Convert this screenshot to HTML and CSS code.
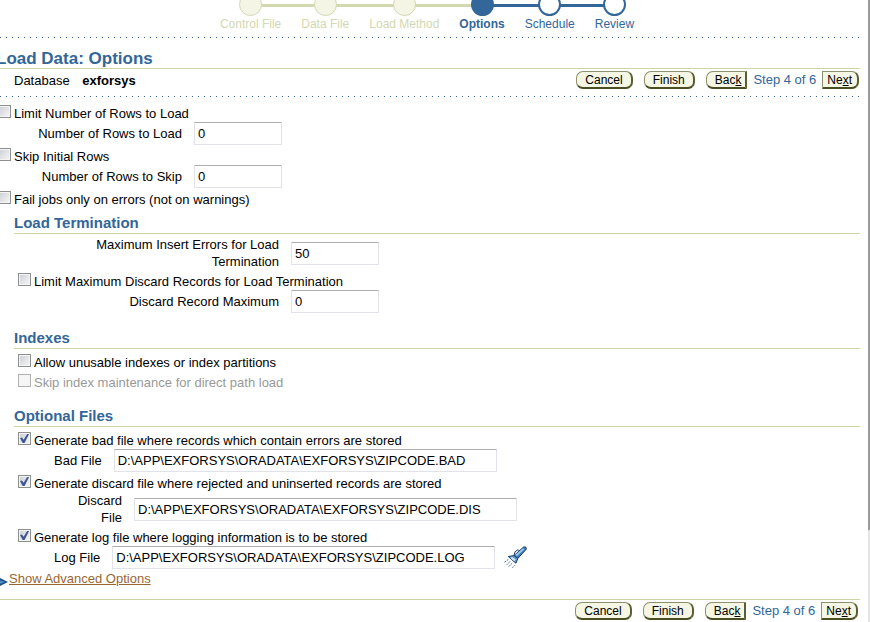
FILE: index.html
```html
<!DOCTYPE html>
<html lang="en">
<head>
    <meta charset="UTF-8">
    <meta name="viewport" content="width=device-width, initial-scale=1.0">
    <title>Load Data: Options</title>
    <link rel="stylesheet" href="styles.css">
</head>
<body>
    <main class="page">
        <ol class="train">
            <li class="step done"><span class="dot"></span>Control File</li>
            <li class="step done"><span class="dot"></span>Data File</li>
            <li class="step done"><span class="dot"></span>Load Method</li>
            <li class="step current"><span class="dot"></span>Options</li>
            <li class="step"><span class="dot"></span>Schedule</li>
            <li class="step"><span class="dot"></span>Review</li>
        </ol>
        <div class="dotted"></div>

        <h1>Load Data: Options</h1>
        <div class="bar">
            <div class="database">Database <b>exforsys</b></div>
            <div class="nav">
                <button type="button">Cancel</button>
                <button type="button">Finish</button>
                <div class="pager">
                    <button type="button" class="back">Bac<u>k</u></button>
                    <span>Step 4 of 6</span>
                    <button type="button" class="next">Ne<u>x</u>t</button>
                </div>
            </div>
        </div>
        <div class="dotted"></div>

        <form class="options">
            <div class="check"><input type="checkbox" id="limit"><label for="limit">Limit Number of Rows to Load</label></div>
            <div class="field rows">
                <label for="load_rows">Number of Rows to Load</label>
                <input type="text" id="load_rows" value="0">
            </div>
            <div class="check"><input type="checkbox" id="skip"><label for="skip">Skip Initial Rows</label></div>
            <div class="field rows">
                <label for="skip_rows">Number of Rows to Skip</label>
                <input type="text" id="skip_rows" value="0">
            </div>
            <div class="check"><input type="checkbox" id="fail"><label for="fail">Fail jobs only on errors (not on warnings)</label></div>

            <section class="termination">
                <h2>Load Termination</h2>
                <div class="field limits">
                    <label for="max_errors">Maximum Insert Errors for Load Termination</label>
                    <input type="text" id="max_errors" value="50">
                </div>
                <div class="check"><input type="checkbox" id="limit_discard"><label for="limit_discard">Limit Maximum Discard Records for Load Termination</label></div>
                <div class="field limits">
                    <label for="max_discard">Discard Record Maximum</label>
                    <input type="text" id="max_discard" value="0">
                </div>
            </section>

            <section>
                <h2>Indexes</h2>
                <div class="check"><input type="checkbox" id="unusable"><label for="unusable">Allow unusable indexes or index partitions</label></div>
                <div class="check"><input type="checkbox" id="maintenance" disabled><label for="maintenance">Skip index maintenance for direct path load</label></div>
            </section>

            <section>
                <h2>Optional Files</h2>
                <div class="check"><input type="checkbox" id="bad" checked><label for="bad">Generate bad file where records which contain errors are stored</label></div>
                <div class="field file">
                    <label for="bad_file">Bad File</label>
                    <input type="text" id="bad_file" value="D:\APP\EXFORSYS\ORADATA\EXFORSYS\ZIPCODE.BAD">
                </div>
                <div class="check"><input type="checkbox" id="discard" checked><label for="discard">Generate discard file where rejected and uninserted records are stored</label></div>
                <div class="field file">
                    <label for="discard_file">Discard File</label>
                    <input type="text" id="discard_file" value="D:\APP\EXFORSYS\ORADATA\EXFORSYS\ZIPCODE.DIS">
                </div>
                <div class="check"><input type="checkbox" id="log" checked><label for="log">Generate log file where logging information is to be stored</label></div>
                <div class="field file">
                    <label for="log_file">Log File</label>
                    <input type="text" id="log_file" value="D:\APP\EXFORSYS\ORADATA\EXFORSYS\ZIPCODE.LOG">
                    <svg class="torch" width="24" height="23" viewBox="0 0 24 24">
                        <path d="M11 10 L12 6 L15 4 L17 5" stroke="#16365c"/>
                        <path d="M21 1 L23 1 L24 3 L15 13 L11 10z" fill="#3f7fbd" stroke="#16365c"/>
                        <path d="M13 10 L21 3" stroke="#9cc8ee" stroke-width="2"/>
                        <path d="M11 10 L15 13 L13 18 L5 11z" fill="#5f9bd2" stroke="#16365c"/>
                        <path d="M8 12 L12 15" stroke="#d5e8f8" stroke-width="2"/>
                        <path d="M5 14 L1 17 M7 16 L3 20 M9 18 L5 22 M12 20 L9 23" stroke="#336699" stroke-dasharray="2 1"/>
                    </svg>
                </div>
            </section>
        </form>

        <div class="advanced">
            <svg width="14" height="10" viewBox="0 0 14 10">
                <path d="M4 0 L14 5 L4 10z" fill="#1f4e82"/>
                <path d="M5 3 L11 5 L5 7z" fill="#4f8fca"/>
            </svg>
            <a href="#">Show Advanced Options</a>
        </div>

        <div class="nav bottom">
            <button type="button">Cancel</button>
            <button type="button">Finish</button>
            <div class="pager">
                <button type="button" class="back">Bac<u>k</u></button>
                <span>Step 4 of 6</span>
                <button type="button" class="next">Ne<u>x</u>t</button>
            </div>
        </div>
    </main>
    <div class="edge"></div>
</body>
</html>
```
FILE: styles.css
```css
* {
    box-sizing: border-box;
}

body {
    display: flex;
    margin: 0;
    min-height: 100vh;
    background: #fff;
    color: #000;
    font: 13px/17px "Liberation Sans", Arial, sans-serif;
    overflow: hidden;
}

.page {
    flex: 1;
    margin: -7px 8px 0 -6px;
}

.edge {
    width: 2px;
    background: linear-gradient(#999 530px, #e4e4e4 530px);
}

/* progress train */
.train {
    display: flex;
    justify-content: center;
    gap: 20px;
    margin: 0 0 4px;
    padding: 0;
    list-style: none;
    font-size: 12px;
    line-height: 17px;
    color: #336699;
}

.step {
    position: relative;
    display: flex;
    flex-direction: column;
    align-items: center;
}

.dot {
    z-index: 1;
    width: 23px;
    height: 23px;
    border: 2px solid #336699;
    border-radius: 50%;
    background: #fff;
}

.step::before,
.step::after {
    content: "";
    position: absolute;
    top: 11px;
    height: 3px;
    background: #336699;
}

.step::before {
    left: -10px;
    right: 50%;
}

.step::after {
    left: 50%;
    right: -10px;
}

.step:first-child::before,
.step:last-child::after {
    display: none;
}

.done {
    color: #d2d8b0;
}

.done::before,
.done::after,
.current::before {
    background: #d2d8b0;
}

.done .dot {
    border: 1px solid #d2d8b0;
    background: #f5f5e6;
}

.current {
    font-weight: bold;
}

.current .dot {
    background: #336699;
}

.dotted {
    height: 1px;
    background: repeating-linear-gradient(90deg, #336699 0 1px, transparent 1px 6px);
}

/* headings */
h1,
h2 {
    margin: 0;
    border-bottom: 1px solid #cfd4a6;
    color: #336699;
}

h1 {
    margin-top: 12px;
    padding-left: 2px;
    font-size: 17px;
    line-height: 18px;
}

h2 {
    margin-bottom: 2px;
    padding-bottom: 2px;
    font-size: 15px;
    line-height: 16px;
}

/* buttons */
.bar {
    display: flex;
    justify-content: space-between;
    padding: 2px 1px 7px 20px;
}

.database {
    padding-top: 1px;
}

.database b {
    margin-left: 9px;
}

.nav {
    display: flex;
    justify-content: flex-end;
    gap: 11px;
}

.pager {
    display: flex;
    gap: 6px;
    line-height: 18px;
    color: #336699;
}

button {
    height: 18px;
    padding: 0 8px;
    border: 1px solid #8c906c;
    border-right: 2px solid #5a5e33;
    border-bottom: 2px solid #4a4e22;
    border-radius: 7px;
    background: #f5f6e3;
    color: #000;
    font: 12px/14px "Liberation Sans", Arial, sans-serif;
    cursor: pointer;
}

.back {
    padding: 0 4px 0 8px;
    border-radius: 7px 0 0 7px;
}

.next {
    padding: 0 5px 0 4px;
    border-radius: 0 7px 7px 0;
}

.bottom {
    padding: 2px 2px 0 0;
    border-top: 1px solid #cfd4a6;
}

/* form */
.options {
    padding-top: 5px;
}

.check {
    display: flex;
    gap: 3px;
    height: 20px;
    padding: 3px 0 0 4px;
}

input[type="checkbox"] {
    appearance: none;
    display: grid;
    place-items: center;
    width: 13px;
    height: 13px;
    margin: 0;
    border: 1px solid #8e8f8f;
    background: linear-gradient(135deg, #cbcfd5, #f6f6f6) padding-box;
    box-shadow: inset 0 0 0 1px #f4f4f4;
}

input[type="checkbox"]:checked::before {
    content: "";
    width: 9px;
    height: 9px;
    background: #3f5495;
    clip-path: polygon(0 45%, 22% 38%, 40% 65%, 80% 0, 100% 0, 50% 100%, 30% 100%);
}

input[type="checkbox"]:disabled {
    border-color: #b1b1b1;
    background: #f6f6f6;
}

input:disabled + label {
    color: #999;
}

.field {
    display: flex;
    align-items: center;
    gap: 12px;
}

.field label {
    text-align: right;
}

.field input {
    width: 88px;
    height: 23px;
    padding: 0 3px;
    border: 1px solid #e2e3ea;
    border-top-color: #abadb3;
    border-radius: 1px;
    background: #fff;
    color: #000;
    font: 13px "Liberation Sans", Arial, sans-serif;
}

.rows label {
    width: 188px;
}

section {
    margin: 17px 0 0 20px;
}

.termination {
    margin-top: 7px;
}

.limits label {
    width: 200px;
    margin-left: 65px;
}

.file label {
    max-width: 68px;
    margin-left: 40px;
}

.file input {
    width: 383px;
}

.torch {
    margin-left: -4px;
    fill: none;
}

.advanced {
    display: flex;
    align-items: flex-end;
    gap: 1px;
    margin: 1px 0 12px;
}

.advanced a {
    color: #996633;
}
```
